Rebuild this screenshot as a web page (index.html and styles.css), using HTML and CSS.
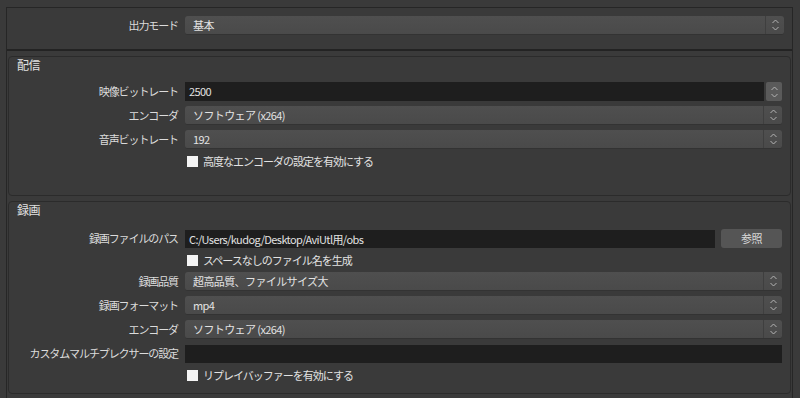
FILE: index.html
```html
<!DOCTYPE html>
<html lang="ja">
<head>
    <meta charset="UTF-8">
    <title>出力設定</title>
    <link rel="stylesheet" href="styles.css">
</head>
<body>
    <div class="frame">
        <div class="mode">
            <div class="row">
                <label class="label">出力モード</label>
                <div class="combo"><span>基本</span><div class="arrow"><svg width="9" height="14" viewBox="0 0 9 14"><path d="M1.5 5 L4.5 2 L7.5 5 M1.5 9 L4.5 12 L7.5 9"/></svg></div></div>
            </div>
        </div>

        <div class="group stream">
            <div class="title">配信</div>
            <div class="form">
                <label class="label">映像ビットレート</label>
                <div class="spin">
                    <div class="spin-field">2500</div>
                    <div class="spin-btn"><svg width="9" height="14" viewBox="0 0 9 14"><path d="M1.5 5 L4.5 2 L7.5 5 M1.5 9 L4.5 12 L7.5 9"/></svg></div>
                </div>

                <label class="label">エンコーダ</label>
                <div class="combo"><span>ソフトウェア (x264)</span><div class="arrow"><svg width="9" height="14" viewBox="0 0 9 14"><path d="M1.5 5 L4.5 2 L7.5 5 M1.5 9 L4.5 12 L7.5 9"/></svg></div></div>

                <label class="label">音声ビットレート</label>
                <div class="combo"><span>192</span><div class="arrow"><svg width="9" height="14" viewBox="0 0 9 14"><path d="M1.5 5 L4.5 2 L7.5 5 M1.5 9 L4.5 12 L7.5 9"/></svg></div></div>

                <span></span>
                <div class="check"><span class="box"></span>高度なエンコーダの設定を有効にする</div>
            </div>
        </div>

        <div class="group record">
            <div class="title">録画</div>
            <div class="form">
                <label class="label">録画ファイルのパス</label>
                <div class="path">
                    <div class="field">C:/Users/kudog/Desktop/AviUtl用/obs</div>
                    <div class="button">参照</div>
                </div>

                <span></span>
                <div class="check"><span class="box"></span>スペースなしのファイル名を生成</div>

                <label class="label">録画品質</label>
                <div class="combo"><span>超高品質、ファイルサイズ大</span><div class="arrow"><svg width="9" height="14" viewBox="0 0 9 14"><path d="M1.5 5 L4.5 2 L7.5 5 M1.5 9 L4.5 12 L7.5 9"/></svg></div></div>

                <label class="label">録画フォーマット</label>
                <div class="combo"><span>mp4</span><div class="arrow"><svg width="9" height="14" viewBox="0 0 9 14"><path d="M1.5 5 L4.5 2 L7.5 5 M1.5 9 L4.5 12 L7.5 9"/></svg></div></div>

                <label class="label">エンコーダ</label>
                <div class="combo"><span>ソフトウェア (x264)</span><div class="arrow"><svg width="9" height="14" viewBox="0 0 9 14"><path d="M1.5 5 L4.5 2 L7.5 5 M1.5 9 L4.5 12 L7.5 9"/></svg></div></div>

                <label class="label">カスタムマルチプレクサーの設定</label>
                <div class="field"></div>

                <span></span>
                <div class="check"><span class="box"></span>リプレイバッファーを有効にする</div>
            </div>
        </div>
    </div>
</body>
</html>
```

FILE: styles.css
```css
* {
    margin: 0;
    padding: 0;
    box-sizing: border-box;
}

body {
    background-color: #3a3a3a;
    color: #e2e2e2;
    font-family: "Noto Sans CJK JP", "Liberation Sans", sans-serif;
    font-size: 11px;
    letter-spacing: -0.6px;
    height: 398px;
    overflow: hidden;
    padding: 7px 7px 0 6px;
}

.frame {
    border: 1px solid #262626;
    border-bottom: none;
    height: 100%;
    background-color: #3a3a3a;
}

.mode {
    height: 43px;
    padding: 8px 8px 0 0;
    border-bottom: 2px solid #232323;
}

.mode .row {
    display: grid;
    grid-template-columns: 172px 1fr;
    column-gap: 6px;
    align-items: center;
}

.label {
    text-align: right;
    color: #dcdcdc;
    white-space: nowrap;
    line-height: 19px;
    letter-spacing: -1.1px;
    padding-right: 1px;
}

.combo {
    height: 19px;
    display: flex;
    align-items: center;
    background: linear-gradient(#4f4f4f, #4a4a4a);
    border-bottom: 1px solid #333;
    border-radius: 3px;
    padding-left: 8px;
}

.combo span {
    flex: 1;
}

.combo .arrow {
    width: 19px;
    height: 100%;
    border-left: 1px solid #3f3f3f;
    display: flex;
    align-items: center;
    justify-content: center;
}

svg path {
    fill: none;
    stroke: #b4b4b4;
    stroke-width: 1;
}

.group {
    margin: 5px 1px 0 1px;
    border: 1px solid #2b2b2b;
    border-radius: 4px;
    padding: 1px 8px 0 0;
}

.stream {
    height: 140px;
}

.record {
    height: 193px;
}

.title {
    padding-left: 8px;
    line-height: 14px;
    color: #e0e0e0;
    font-size: 12px;
}

.form {
    margin-top: 10px;
    display: grid;
    grid-template-columns: 170px 1fr;
    column-gap: 6px;
    row-gap: 5px;
    align-items: center;
}

.record .form {
    margin-top: 12px;
}

.spin {
    display: flex;
    gap: 2px;
    height: 19px;
}

.spin-field {
    flex: 1;
    background-color: #1e1e1e;
    padding-left: 4px;
    line-height: 19px;
}

.spin-btn {
    width: 16px;
    background-color: #5a5a5a;
    border-radius: 2px;
    display: flex;
    align-items: center;
    justify-content: center;
}

.field {
    height: 18px;
    background-color: #1e1e1e;
    padding-left: 4px;
    line-height: 18px;
}

.path {
    display: flex;
    gap: 6px;
    align-items: center;
}

.path .field {
    flex: 1;
}

.button {
    width: 61px;
    height: 19px;
    background-color: #555;
    border-radius: 3px;
    text-align: center;
    line-height: 19px;
    color: #d8d8d8;
}

.check {
    display: flex;
    align-items: center;
    gap: 5px;
    padding-left: 2px;
    line-height: 14px;
    letter-spacing: -1px;
}

.box {
    width: 11px;
    height: 11px;
    background-color: #f4f4f4;
}
```
